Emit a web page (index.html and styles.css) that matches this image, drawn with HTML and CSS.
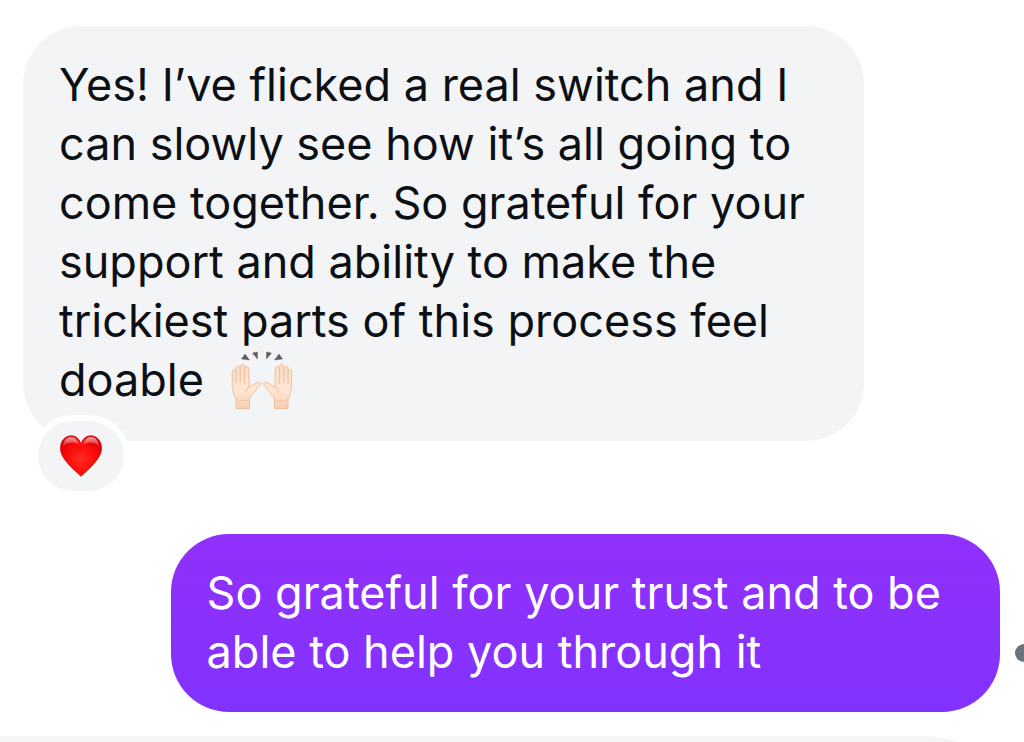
FILE: index.html
```html
<!DOCTYPE html>
<html lang="en">
<head>
<meta charset="utf-8">
<meta name="viewport" content="width=device-width, initial-scale=1">
<title>Chat</title>
<link rel="stylesheet" href="styles.css">
</head>
<body>
<main class="chat">
  <article class="row row-received">
    <div class="bubble bubble-received">Yes! I’ve flicked a real switch and I can slowly see how it’s all going to come together. So grateful for your support and ability to make the trickiest parts of this process feel doable
      <svg class="hands" viewBox="0 0 62 58" role="img" aria-label="Raising hands">
        <defs>
          <linearGradient id="skin" x1="0" y1="0" x2="0" y2="1">
            <stop offset="0" stop-color="#fbdcc3"/>
            <stop offset=".6" stop-color="#fee6d4"/>
            <stop offset="1" stop-color="#f7cdb0"/>
          </linearGradient>
          <g id="hand">
            <path d="M5 57.500V48C2.500 44 1.500 39 1.300 34V20.500C1.300 17.500 4.600 17.500 4.900 20.500V17.500C5 14.500 9 14.500 9.200 17.500V15.500C9.400 12.500 13.200 12.500 13.400 15.500V17.500C13.800 14.500 17.600 14.700 17.700 18L18 36C20.500 35 22.500 33.500 25 32C28 30.300 30.600 31.500 29 34L22 43C20.500 45 19 46.500 18.500 48.500V57.500Z" fill="url(#skin)" stroke="#eeb78f" stroke-width=".8" stroke-linejoin="round"/>
            <path d="M4.900 20.500V32M9.200 17.500V31M13.400 17.500V32M18 36C16 37 15 39 15 41" fill="none" stroke="#edb992" stroke-width=".9" stroke-linecap="round"/>
            <path d="M5 48.500C9 50 14 50 18.500 49" fill="none" stroke="#f0bf9b" stroke-width=".8"/>
          </g>
        </defs>
        <use href="#hand"/>
        <use href="#hand" transform="translate(62 0) scale(-1 1)"/>
        <path d="M14 3L18.500 9L10.500 8ZM21.500 2L26.500 1V8ZM35.500 1L40.500 2L35.500 8ZM48 3L51.500 8L43.500 9Z" fill="#5c5e60" stroke="#5c5e60" stroke-width=".4" stroke-linejoin="round"/>
      </svg>
    </div>
    <button class="reaction" type="button" aria-label="Heart reaction">
      <svg class="heart" viewBox="0 0 42 42" aria-hidden="true">
        <defs>
          <radialGradient id="red" cx=".5" cy=".58" r=".6">
            <stop offset="0" stop-color="#ff2a20"/>
            <stop offset=".6" stop-color="#fb0a08"/>
            <stop offset="1" stop-color="#dc0008"/>
          </radialGradient>
          <linearGradient id="shine" x1="0" y1="0" x2="0" y2="1">
            <stop offset="0" stop-color="#fff" stop-opacity=".65"/>
            <stop offset="1" stop-color="#fff" stop-opacity="0"/>
          </linearGradient>
        </defs>
        <path d="M21 41.300C17 37.500 11.500 33 7 27.500C3 22.500 .5 18.500 .5 13C.5 6 5 .8 11.300 .8C16 .8 19.500 4 21 9C22.500 4 26 .8 30.700 .8C37 .8 41.500 6 41.500 13C41.500 18.500 39 22.500 35 27.500C30.500 33 25 37.500 21 41.300Z" fill="url(#red)" stroke="#c9161a" stroke-width=".8"/>
        <path d="M3 12C3 6 6.500 2 11 2C15 2 18 5 19.500 10C16 8 13 7 10 8C7 8 5 10 3 12ZM39 12C39 6 35.500 2 31 2C27 2 24 5 22.500 10C26 8 29 7 32 8C35 8 37 10 39 12Z" fill="url(#shine)"/>
      </svg>
    </button>
  </article>
  <article class="row row-sent">
    <div class="bubble bubble-sent">So grateful for your trust and to be able to help you through it</div>
    <button class="status" type="button" aria-label="Message status"></button>
  </article>
  <div class="next-bubble"></div>
</main>
</body>
</html>
```
FILE: styles.css
```css
body {
  margin: 0;
  background: #fff;
  font-family: Inter, "Liberation Sans", sans-serif;
}

.chat {
  display: flex;
  flex-direction: column;
  box-sizing: border-box;
  height: 100vh;
  padding-top: 26px;
  overflow: hidden;
}

.row {
  display: flex;
  flex: none;
  position: relative;
}

.row-received {
  margin-left: 23px;
  margin-bottom: 93px;
}

.row-sent {
  justify-content: flex-end;
  align-items: flex-end;
  margin-bottom: 24px;
}

.bubble {
  box-sizing: border-box;
  padding: 29px 36px 31px;
  border-radius: 58px;
  font-size: 45px;
  line-height: 59px;
}

.bubble-received {
  width: 84%;
  padding-bottom: 32px;
  background: #f3f4f6;
  color: #0c1014;
}

.bubble-sent {
  width: 81%;
  background: linear-gradient(#9130fc, #8232ff);
  color: #fff;
}

.hands {
  width: 62px;
  height: 58px;
  margin-left: 14px;
  vertical-align: bottom;
}

.reaction {
  position: absolute;
  left: 9px;
  bottom: -56px;
  display: grid;
  place-items: center;
  box-sizing: border-box;
  width: 98px;
  height: 82px;
  padding: 0;
  border: 6px solid #fff;
  border-radius: 42px;
  background: #f3f4f6;
}

.heart {
  width: 42px;
  height: 42px;
}

.status {
  flex: none;
  width: 18px;
  height: 18px;
  margin: 0 -9px 50px 15px;
  padding: 0;
  border: 0;
  border-radius: 50%;
  background: #6a727b;
}

.next-bubble {
  flex: none;
  height: 120px;
  border-top-right-radius: 100px;
  background: #f6f6f6;
}
```
